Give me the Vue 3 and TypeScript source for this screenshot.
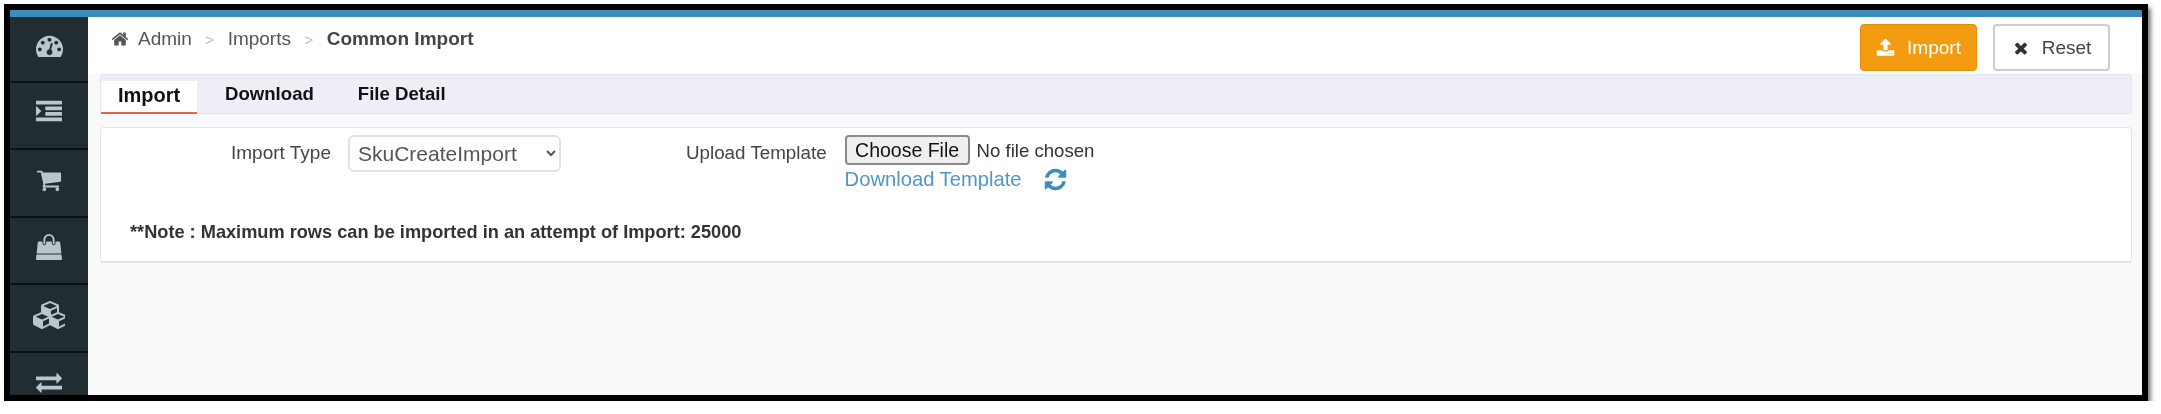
<template>
  <div class="frame">
    <div class="topbar"></div>
    <div class="shell">
      <aside class="sidebar">
        <div v-for="item in navIcons" :key="item.name" class="nav-item" :title="item.name">
          <svg :viewBox="item.box" :width="item.width" :height="item.height" fill="currentColor"><path :d="item.d" /></svg>
        </div>
      </aside>
      <main class="content">
        <header class="page-head">
          <nav class="crumbs">
            <svg class="home" viewBox="0 0 1792 1792" width="18" height="18" fill="currentColor"><path :d="homePath" /></svg>
            <span>Admin</span>
            <span class="sep">&gt;</span>
            <span>Imports</span>
            <span class="sep">&gt;</span>
            <span class="current">Common Import</span>
          </nav>
          <div class="actions">
            <button class="btn btn-import">
              <svg viewBox="0 0 1792 1792" width="19" height="19" fill="currentColor"><path :d="uploadPath" /></svg>
              Import
            </button>
            <button class="btn btn-reset">
              <svg viewBox="0 0 1792 1792" width="18" height="18" fill="currentColor"><path :d="timesPath" /></svg>
              Reset
            </button>
          </div>
        </header>

        <div class="tabs">
          <a v-for="tab in tabs" :key="tab" :class="['tab', { active: tab === activeTab }]" @click="activeTab = tab">{{ tab }}</a>
        </div>

        <section class="panel">
          <div class="form-row">
            <label class="type-label">Import Type</label>
            <select class="type-select">
              <option>SkuCreateImport</option>
            </select>
            <label class="upload-label">Upload Template</label>
            <div class="upload">
              <input type="file" class="file" />
              <div class="template">
                <a class="template-link">Download Template</a>
                <svg viewBox="0 0 1792 1792" width="25" height="25" fill="currentColor"><path :d="refreshPath" /></svg>
              </div>
            </div>
          </div>
          <p class="note">**Note : Maximum rows can be imported in an attempt of Import: 25000</p>
        </section>
      </main>
    </div>
  </div>
</template>

<script setup lang="ts">
import { ref } from 'vue'

const tabs = ['Import', 'Download', 'File Detail']
const activeTab = ref('Import')

const homePath = 'M1472 992v480q0 26-19 45t-45 19h-384v-384h-256v384h-384q-26 0-45-19t-19-45v-480q0-1 .5-3t.5-3l575-474 575 474q1 2 1 6zm223-69l-62 74q-8 9-21 11h-3q-13 0-21-7l-692-577-692 577q-12 8-24 7-13-2-21-11l-62-74q-8-10-7-23.5t11-21.5l719-599q32-26 76-26t76 26l244 204v-195q0-14 9-23t23-9h192q14 0 23 9t9 23v408l219 182q10 8 11 21.5t-7 23.5z'
const uploadPath = 'M1344 1472q0-26-19-45t-45-19-45 19-19 45 19 45 45 19 45-19 19-45zm256 0q0-26-19-45t-45-19-45 19-19 45 19 45 45 19 45-19 19-45zm128-224v320q0 40-28 68t-68 28h-1472q-40 0-68-28t-28-68v-320q0-40 28-68t68-28h427q21 56 70.5 92t110.5 36h256q61 0 110.5-36t70.5-92h427q40 0 68 28t28 68zm-325-648q-17 40-59 40h-256v448q0 26-19 45t-45 19h-256q-26 0-45-19t-19-45v-448h-256q-42 0-59-40-17-39 14-69l448-448q18-19 45-19t45 19l448 448q31 30 14 69z'
const timesPath = 'M1490 1322q0 40-28 68l-136 136q-28 28-68 28t-68-28l-294-294-294 294q-28 28-68 28t-68-28l-136-136q-28-28-28-68t28-68l294-294-294-294q-28-28-28-68t28-68l136-136q28-28 68-28t68 28l294 294 294-294q28-28 68-28t68 28l136 136q28 28 28 68t-28 68l-294 294 294 294q28 28 28 68z'
const refreshPath = 'M1639 1056q0 5-1 7-64 268-268 434.5t-478 166.5q-146 0-282.5-55t-243.5-157l-129 129q-19 19-45 19t-45-19-19-45v-448q0-26 19-45t45-19h448q26 0 45 19t19 45-19 45l-137 137q71 66 161 102t187 36q134 0 250-65t186-179q11-17 53-117 8-23 30-23h192q13 0 22.5 9.5t9.5 22.5zm25-800v448q0 26-19 45t-45 19h-448q-26 0-45-19t-19-45 19-45l138-138q-148-137-349-137-134 0-250 65t-186 179q-11 17-53 117-8 23-30 23h-199q-13 0-22.5-9.5t-9.5-22.5v-7q65-268 270-434.5t480-166.5q146 0 284 55.5t245 156.5l130-129q19-19 45-19t45 19 19 45z'

const navIcons = [
  {
    name: 'Dashboard',
    box: '0 0 1792 1792',
    width: 27,
    height: 27,
    d: 'M384 1152q0-53-37.5-90.5t-90.5-37.5-90.5 37.5-37.5 90.5 37.5 90.5 90.5 37.5 90.5-37.5 37.5-90.5zm192-448q0-53-37.5-90.5t-90.5-37.5-90.5 37.5-37.5 90.5 37.5 90.5 90.5 37.5 90.5-37.5 37.5-90.5zm428 481l101-382q6-26-7.5-48.5t-38.5-29.5-48 6.5-30 39.5l-101 382q-60 5-107 43.5t-63 98.5q-20 77 20 146t117 89 146-20 89-117q16-60-6-117t-72-91zm660-33q0-53-37.5-90.5t-90.5-37.5-90.5 37.5-37.5 90.5 37.5 90.5 90.5 37.5 90.5-37.5 37.5-90.5zm-640-640q0-53-37.5-90.5t-90.5-37.5-90.5 37.5-37.5 90.5 37.5 90.5 90.5 37.5 90.5-37.5 37.5-90.5zm448 192q0-53-37.5-90.5t-90.5-37.5-90.5 37.5-37.5 90.5 37.5 90.5 90.5 37.5 90.5-37.5 37.5-90.5zm320 448q0 261-141 483-19 29-54 29h-1402q-35 0-54-29-141-221-141-483 0-182 71-348t191-286 286-191 348-71 348 71 286 191 191 286 71 348z'
  },
  {
    name: 'Orders',
    box: '0 0 1792 1792',
    width: 26,
    height: 26,
    d: 'M352 832q0 14-9 23l-288 288q-9 9-23 9-13 0-22.5-9.5t-9.5-22.5v-576q0-13 9.5-22.5t22.5-9.5q14 0 23 9l288 288q9 9 9 23zm1440 480v192q0 13-9.5 22.5t-22.5 9.5h-1728q-13 0-22.5-9.5t-9.5-22.5v-192q0-13 9.5-22.5t22.5-9.5h1728q13 0 22.5 9.5t9.5 22.5zm0-384v192q0 13-9.5 22.5t-22.5 9.5h-1088q-13 0-22.5-9.5t-9.5-22.5v-192q0-13 9.5-22.5t22.5-9.5h1088q13 0 22.5 9.5t9.5 22.5zm0-384v192q0 13-9.5 22.5t-22.5 9.5h-1088q-13 0-22.5-9.5t-9.5-22.5v-192q0-13 9.5-22.5t22.5-9.5h1088q13 0 22.5 9.5t9.5 22.5zm0-384v192q0 13-9.5 22.5t-22.5 9.5h-1728q-13 0-22.5-9.5t-9.5-22.5v-192q0-13 9.5-22.5t22.5-9.5h1728q13 0 22.5 9.5t9.5 22.5z'
  },
  {
    name: 'Cart',
    box: '0 0 1792 1792',
    width: 26,
    height: 26,
    d: 'M704 1536q0 52-38 90t-90 38-90-38-38-90 38-90 90-38 90 38 38 90zm896 0q0 52-38 90t-90 38-90-38-38-90 38-90 90-38 90 38 38 90zm128-1088v512q0 24-16.5 42.5t-40.5 21.5l-1044 122q13 60 13 70 0 16-24 64h920q26 0 45 19t19 45-19 45-45 19h-1024q-26 0-45-19t-19-45q0-11 8-31.5t16-36 21.5-40 15.5-29.5l-177-823h-204q-26 0-45-19t-19-45 19-45 45-19h256q16 0 28.5 6.5t19.5 15.5 13 24.5 8 26 5.5 29.5 4.5 26h1201q26 0 45 19t19 45z'
  },
  {
    name: 'Bag',
    box: '0 0 1792 1792',
    width: 26,
    height: 26,
    d: 'M1757 1408l35 313q3 28-16 50-19 21-48 21h-1664q-29 0-48-21-19-22-16-50l35-313h1722zm-93-839l86 775h-1708l86-775q3-24 21-40.5t43-16.5h256v128q0 53 37.5 90.5t90.5 37.5 90.5-37.5 37.5-90.5v-128h384v128q0 53 37.5 90.5t90.5 37.5 90.5-37.5 37.5-90.5v-128h256q25 0 43 16.5t21 40.5zm-384-185v256q0 26-19 45t-45 19-45-19-19-45v-256q0-106-75-181t-181-75-181 75-75 181v256q0 26-19 45t-45 19-45-19-19-45v-256q0-159 112.5-271.5t271.5-112.5 271.5 112.5 112.5 271.5z'
  },
  {
    name: 'Products',
    box: '0 0 2048 1792',
    width: 32,
    height: 28,
    d: 'M640 1632l384-192v-314l-384 164v342zm-64-454l404-173-404-173-404 173zm1088 454l384-192v-314l-384 164v342zm-64-454l404-173-404-173-404 173zm-448-293l384-165v-266l-384 164v267zm-64-379l441-189-441-189-441 189zm1088 518v416q0 36-19 67t-52 47l-448 224q-25 14-57 14t-57-14l-448-224q-4-2-7-4-2 2-7 4l-448 224q-25 14-57 14t-57-14l-448-224q-33-16-52-47t-19-67v-416q0-38 21.5-70t56.5-48l434-186v-400q0-38 21.5-70t56.5-48l448-192q23-10 50-10t50 10l448 192q35 16 56.5 48t21.5 70v400l434 186q36 16 57 48t21 70z'
  },
  {
    name: 'Transfers',
    box: '0 0 1792 1792',
    width: 26,
    height: 26,
    d: 'M1792 1184v192q0 13-9.5 22.5t-22.5 9.5h-1376v192q0 13-9.5 22.5t-22.5 9.5q-12 0-24-10l-319-320q-9-9-9-22 0-14 9-23l320-320q9-9 23-9 13 0 22.5 9.5t9.5 22.5v192h1376q13 0 22.5 9.5t9.5 22.5zm0-544q0 14-9 23l-320 320q-9 9-23 9-13 0-22.5-9.5t-9.5-22.5v-192h-1376q-13 0-22.5-9.5t-9.5-22.5v-192q0-13 9.5-22.5t22.5-9.5h1376v-192q0-14 9-23t23-9q12 0 24 10l319 319q9 9 9 23z'
  }
]
</script>

<style>
html,
body {
  margin: 0;
  background: #fff;
}
</style>

<style scoped>
.frame {
  box-sizing: border-box;
  width: 2144px;
  height: 397px;
  margin: 4px 0 0 4px;
  border: 6px solid #000;
  display: flex;
  flex-direction: column;
  overflow: hidden;
  box-shadow: 3px 4px 4px rgba(0, 0, 0, 0.5);
  font-family: "Liberation Sans", Arial, sans-serif;
  color: #444;
  background: #f8f9fb;
}

.topbar {
  height: 7px;
  flex: none;
  background: #3c8dbc;
}

.shell {
  flex: 1;
  display: flex;
  min-height: 0;
  filter: blur(0.4px);
}

.sidebar {
  width: 78px;
  flex: none;
  overflow: hidden;
  background: #222d32;
  color: #b8c7ce;
}

.nav-item {
  box-sizing: border-box;
  height: 67.5px;
  padding-bottom: 6px;
  display: flex;
  align-items: center;
  justify-content: center;
  border-bottom: 2px solid #0b1013;
}

.nav-item:first-child {
  height: 65.5px;
}

.content {
  flex: 1;
  min-width: 0;
}

.page-head {
  height: 57px;
  background: #fff;
  display: flex;
  justify-content: space-between;
  padding: 7px 32px 0 23px;
  box-sizing: border-box;
}

.crumbs {
  display: flex;
  align-items: center;
  gap: 13.5px;
  height: 30px;
  font-size: 19px;
  color: #555;
}

.crumbs .home {
  margin-right: -4.5px;
}

.crumbs .sep {
  color: #bbb;
  font-size: 15px;
}

.crumbs .current {
  color: #444;
  font-weight: 700;
}

.actions {
  display: flex;
  gap: 16px;
}

.btn {
  width: 117px;
  height: 47px;
  border-radius: 4px;
  font: 19px "Liberation Sans", Arial, sans-serif;
  display: flex;
  align-items: center;
  justify-content: center;
  gap: 12px;
  box-sizing: border-box;
}

.btn-import {
  background: #f39c12;
  border: 1px solid #e08e0b;
  color: #fff;
}

.btn-reset {
  background: #fff;
  border: 2px solid #ccc;
  color: #444;
}

.btn-reset svg {
  color: #333;
}

.tabs {
  height: 40px;
  margin: 0 10px 0 12px;
  box-sizing: border-box;
  padding-top: 6px;
  display: flex;
  background: #edeef6;
  border: 1px solid #e4e6ee;
  border-radius: 3px;
}

.tab {
  height: 33px;
  padding: 1px 22px 0;
  box-sizing: border-box;
  font-size: 18.6px;
  font-weight: 700;
  line-height: 24px;
  color: #111;
  cursor: pointer;
}

.tab.active {
  width: 96px;
  margin-right: 6px;
  padding: 2px 0 0;
  text-align: center;
  font-size: 20px;
  background: #fff;
  border-bottom: 2px solid #e8604c;
}

.panel {
  height: 136px;
  box-sizing: border-box;
  margin: 13px 10px 0 12px;
  padding: 7px 0 0 130px;
  background: #fff;
  border: 1px solid #e3e5ec;
  border-bottom: 2px solid #dfe1e6;
  border-radius: 4px;
}

.form-row {
  display: flex;
  align-items: flex-start;
}

.type-label,
.upload-label {
  font-size: 19px;
  line-height: 36px;
}

.type-select {
  width: 213px;
  height: 37px;
  margin-left: 17px;
  padding: 0 4px;
  font: 21px "Liberation Sans", Arial, sans-serif;
  color: #555;
  background: #fff;
  border: 2px solid #dfe2e8;
  border-radius: 6px;
}

.upload-label {
  margin-left: 125px;
  font-size: 18.8px;
}

.upload {
  margin-left: 18px;
}

.file {
  display: block;
  width: 300px;
  height: 30px;
  font: 18.6px "Liberation Sans", Arial, sans-serif;
  color: #333;
}

.file::file-selector-button {
  width: 125px;
  height: 30px;
  margin-right: 7px;
  padding: 0;
  font: 19.5px "Liberation Sans", Arial, sans-serif;
  color: #111;
  background: #efefef;
  border: 2px solid #8a8a8a;
  border-radius: 4px;
}

.template {
  display: flex;
  align-items: center;
  gap: 21px;
  margin-top: 2px;
  color: #3c8dbc;
}

.template-link {
  font-size: 20.2px;
  color: #4f97c7;
}

.note {
  margin: 30px 0 0 -101px;
  font-size: 18.2px;
  font-weight: 700;
  color: #333;
}
</style>
